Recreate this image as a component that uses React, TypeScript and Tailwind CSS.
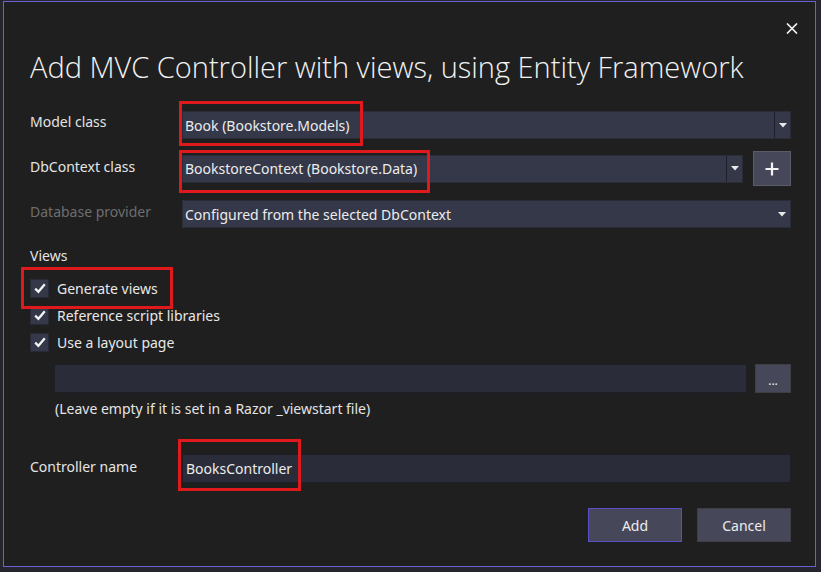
import React from "react";

const font = { fontFamily: '"Noto Sans", "Open Sans", sans-serif' };

function Arrow() {
  return (
    <svg width="8" height="5" viewBox="0 0 8 5" className="block">
      <path d="M0 0 H8 L4 4.5 Z" fill="#e8e8e8" />
    </svg>
  );
}

function Combo({ value, split = true }: { value: string; split?: boolean }) {
  return (
    <div className="flex h-[28px] flex-1 items-stretch border border-[#2a2c37] bg-[#353849]">
      <div className="flex flex-1 items-center pl-[2px] text-[14px] text-[#ececec]">{value}</div>
      <div className={`flex w-[16px] items-center justify-center ${split ? "border-l border-[#1f2029]" : ""}`}>
        <Arrow />
      </div>
    </div>
  );
}

function Check({ label }: { label: string }) {
  return (
    <div className="flex h-[27px] items-center">
      <div className="flex h-[19px] w-[19px] items-center justify-center border border-[#272936] bg-[#353849]">
        <svg width="12" height="11" viewBox="0 0 12 11">
          <path d="M1.2 5.6 L4.4 8.8 L10.8 1.2" fill="none" stroke="#f4f4f4" strokeWidth="2.3" />
        </svg>
      </div>
      <span className="ml-[8px] text-[14px] text-[#e8e8e8]">{label}</span>
    </div>
  );
}

export default function App() {
  return (
    <div className="relative h-[572px] w-[821px] overflow-hidden bg-[#24252d]" style={font}>
      <div className="ml-[3px] mt-[1px] h-[566px] w-[813px] border border-[#6b5fd1] bg-[#1f1f1f]">
        <div className="flex flex-col pl-[26px] pr-[24px]">
          <div className="flex h-[38px] justify-end pt-[21px]">
            <svg width="12" height="11" viewBox="0 0 12 11" className="-mr-[7px]">
              <path d="M1 0.5 L11 10.5 M11 0.5 L1 10.5" stroke="#f0f0f0" strokeWidth="1.7" />
            </svg>
          </div>
          <h1
            className="mt-[9px] h-[36px] text-[29px] leading-[36px] font-light text-[#f2f2f2]"
            style={{ fontFamily: '"Open Sans", "Noto Sans", sans-serif' }}
          >
            Add MVC Controller with views, using Entity Framework
          </h1>

          <div className="mt-[26px] grid grid-cols-[152px_1fr] items-start">
            <div className="h-[20px] pt-[1px] text-[14px] leading-[20px] text-[#e4e4e4]">Model class</div>
            <Combo value="Book (Bookstore.Models)" />

            <div className="mt-[12px] pt-[6px] text-[14px] leading-[20px] text-[#e4e4e4]">DbContext class</div>
            <div className="mt-[12px] flex items-center gap-[10px]">
              <Combo value="BookstoreContext (Bookstore.Data)" />
              <div className="flex h-[35px] w-[38px] items-center justify-center border border-[#595b66] bg-[#464859]">
                <svg width="14" height="14" viewBox="0 0 14 14">
                  <path d="M7 0.5 V13.5 M0.5 7 H13.5" stroke="#f4f4f4" strokeWidth="2.2" />
                </svg>
              </div>
            </div>

            <div className="mt-[14px] pt-[2px] text-[14px] leading-[20px] text-[#6e6e6e]">Database provider</div>
            <div className="mt-[14px] flex">
              <Combo value="Configured from the selected DbContext" split={false} />
            </div>
          </div>

          <div className="mt-[18px] h-[20px] text-[14px] leading-[20px] text-[#e4e4e4]">Views</div>
          <div className="mt-[9px] flex flex-col">
            <Check label="Generate views" />
            <Check label="Reference script libraries" />
            <Check label="Use a layout page" />
          </div>

          <div className="ml-[24px] mt-[8px] flex gap-[8px]">
            <div className="h-[29px] flex-1 border border-[#1d1e26] bg-[#2a2c3a]" />
            <div className="flex h-[29px] w-[36px] items-center justify-center border border-[#3e3e44] bg-[#464859] pt-[4px] text-[12px] leading-none text-[#f0f0f0]">
              ...
            </div>
          </div>
          <div className="ml-[25px] mt-[6px] text-[14px] leading-[20px] text-[#e4e4e4]">
            (Leave empty if it is set in a Razor _viewstart file)
          </div>

          <div className="mt-[35px] grid grid-cols-[152px_1fr] items-start">
            <div className="pt-[3px] text-[14px] leading-[20px] text-[#e4e4e4]">Controller name</div>
            <div className="flex h-[29px] items-center border border-[#1d1e26] bg-[#2a2c3a] pl-[3px] text-[14px] text-[#ececec]">
              BooksController
            </div>
          </div>

          <div className="mt-[25px] flex justify-end gap-[15px]">
            <button className="h-[34px] w-[94px] border border-[#5a4fc4] bg-[#464859] text-[14px] text-[#ececec]">
              Add
            </button>
            <button className="h-[34px] w-[94px] border border-[#3e3e44] bg-[#464859] text-[14px] text-[#ececec]">
              Cancel
            </button>
          </div>
        </div>
      </div>

      <div className="absolute left-[179px] top-[101px] h-[45px] w-[184px] border-[3px] border-[#e0191c]" />
      <div className="absolute left-[179px] top-[150px] h-[43px] w-[251px] border-[3px] border-[#e0191c]" />
      <div className="absolute left-[21px] top-[267px] h-[42px] w-[152px] border-[3px] border-[#e0191c]" />
      <div className="absolute left-[178px] top-[439px] h-[52px] w-[123px] border-[3px] border-[#e0191c]" />
    </div>
  );
}
